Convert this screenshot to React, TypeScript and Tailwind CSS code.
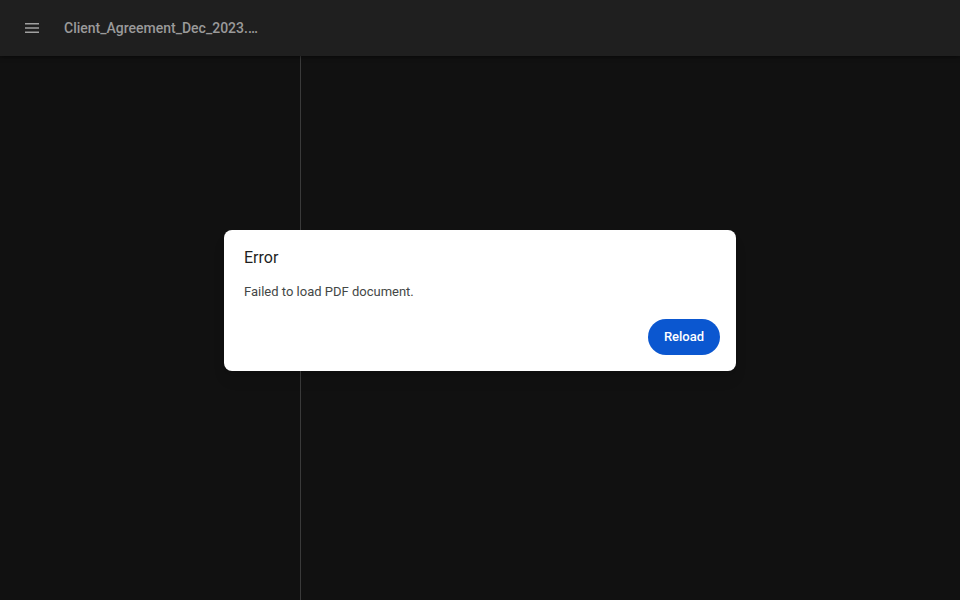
export default function App() {
  return (
    <div className="relative flex h-[600px] w-[960px] flex-col overflow-hidden bg-[#111111] font-['Roboto','Liberation_Sans',sans-serif]">
      {/* toolbar */}
      <header className="relative z-10 flex h-14 shrink-0 items-center bg-[#1f1f1f] shadow-[0_1px_4px_rgba(0,0,0,0.5)]">
        <button className="ml-[22px] flex h-5 w-5 items-center justify-center text-[#a0a0a0]">
          <svg viewBox="0 0 20 20" width="20" height="20" fill="currentColor">
            <path d="M3 15h14v-1.5H3V15zm0-4.25h14v-1.5H3v1.5zM3 5v1.5h14V5H3z" />
          </svg>
        </button>
        <div className="ml-[22px] text-[14px] font-medium text-[#9a9a9a]">Client_Agreement_Dec_2023.…</div>
      </header>

      {/* body */}
      <div className="flex flex-1">
        <aside className="w-[301px] shrink-0 border-r border-[#3a3a3a] bg-[#111111]" />
        <main className="flex-1 bg-[#111111]" />
      </div>

      {/* error dialog */}
      <div className="absolute inset-0 z-20 flex items-center justify-center">
        <div className="w-[512px] rounded-lg bg-white pb-4 pl-5 pr-4 pt-4 shadow-lg">
          <h2 className="text-[16px] leading-6 text-[#1f1f1f]">Error</h2>
          <p className="mt-3 text-[13px] leading-5 text-[#444746]">Failed to load PDF document.</p>
          <div className="mt-[17px] flex justify-end">
            <button className="h-9 w-[72px] rounded-full bg-[#0b57d0] text-[13px] font-medium text-white">Reload</button>
          </div>
        </div>
      </div>
    </div>
  );
}
